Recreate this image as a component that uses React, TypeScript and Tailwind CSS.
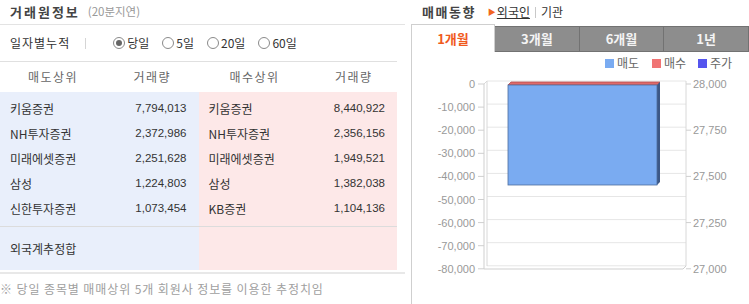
import React from 'react';

const kr = "font-['Noto_Sans_CJK_KR','Noto_Sans',sans-serif]";
const num = "font-['Liberation_Sans',Arial,sans-serif]";

const sells = [
  ['키움증권', '7,794,013'],
  ['NH투자증권', '2,372,986'],
  ['미래에셋증권', '2,251,628'],
  ['삼성', '1,224,803'],
  ['신한투자증권', '1,073,454'],
];

const buys = [
  ['키움증권', '8,440,922'],
  ['NH투자증권', '2,356,156'],
  ['미래에셋증권', '1,949,521'],
  ['삼성', '1,382,038'],
  ['KB증권', '1,104,136'],
];

const periods = [
  { label: '당일', checked: true },
  { label: '5일' },
  { label: '20일' },
  { label: '60일' },
];

function Radio({ checked }: { checked?: boolean }) {
  return (
    <span className="w-[12px] h-[12px] rounded-full border border-[#8a8a8a] bg-white flex items-center justify-center mr-[2px]">
      {checked && <span className="w-[6px] h-[6px] rounded-full bg-[#666]" />}
    </span>
  );
}

function RankRows({ rows }: { rows: string[][] }) {
  return (
    <div className="pt-[4px] pb-[5px]">
      {rows.map(([name, vol]) => (
        <div key={name} className="h-[25px] flex items-center justify-between pl-[10px] pr-[12px]">
          <span className="text-[12px]">{name}</span>
          <span className={`${num} text-[11.5px] text-[#333]`}>{vol}</span>
        </div>
      ))}
    </div>
  );
}

function Chart() {
  const left = [0, -10000, -20000, -30000, -40000, -50000, -60000, -70000, -80000];
  const right = [28000, 27750, 27500, 27250, 27000];
  return (
    <svg width="337" height="252" className="block">
      {/* legend */}
      <rect x="193" y="7" width="9" height="9" fill="#7aabf1" />
      <text x="205" y="16" fontSize="12" fill="#666" fontFamily="Noto Sans CJK KR">매도</text>
      <rect x="240" y="7" width="9" height="9" fill="#f07474" />
      <text x="252" y="16" fontSize="12" fill="#666" fontFamily="Noto Sans CJK KR">매수</text>
      <rect x="286" y="7" width="9" height="9" fill="#5555ee" />
      <text x="298" y="16" fontSize="12" fill="#666" fontFamily="Noto Sans CJK KR">주가</text>

      {/* grid + walls */}
      {left.map((v, i) => (
        <line key={v} x1="75" x2="274" y1={29 + i * 23.1} y2={29 + i * 23.1} stroke="#e6e6e6" />
      ))}
      <line x1="75" x2="75" y1="29" y2="214" stroke="#d8d8d8" />
      <line x1="72" x2="72" y1="32" y2="217" stroke="#cfcfcf" />
      <line x1="72" x2="75" y1="32" y2="29" stroke="#d8d8d8" />
      <line x1="274" x2="274" y1="29" y2="214" stroke="#d8d8d8" />
      <line x1="72" x2="271" y1="217" y2="217" stroke="#cfcfcf" />
      <line x1="271" x2="274" y1="217" y2="214" stroke="#cfcfcf" />

      {left.map((v, i) => (
        <g key={v}>
          <line x1="66" x2="72" y1={32 + i * 23.1} y2={32 + i * 23.1} stroke="#cfcfcf" />
          <text x="63" y={36 + i * 23.1} fontSize="11" fill="#999" textAnchor="end" fontFamily="Liberation Sans">
            {v.toLocaleString('en-US')}
          </text>
        </g>
      ))}
      {right.map((v, i) => (
        <g key={v}>
          <line x1="274" x2="279" y1={32 + i * 46.2} y2={32 + i * 46.2} stroke="#cfcfcf" />
          <text x="281" y={36 + i * 46.2} fontSize="11" fill="#999" fontFamily="Liberation Sans">
            {v.toLocaleString('en-US')}
          </text>
        </g>
      ))}

      {/* bar */}
      <polygon points="96,33 99,30 248,30 245,33" fill="#df6a6a" stroke="#b54c4c" strokeWidth="0.8" />
      <polygon points="245,33 248,30 248,130 245,133" fill="#3d5886" />
      <rect x="96" y="33" width="149" height="100" fill="#7aabf1" stroke="#4e6e9e" strokeWidth="0.8" />
    </svg>
  );
}

export default function App() {
  return (
    <div className={`${kr} flex w-[749px] h-[304px] overflow-hidden bg-white text-[#333]`}>
      {/* left: 거래원정보 */}
      <div className="w-[405px] shrink-0">
        <div className="h-[25px] flex items-center pl-[10px] border-b border-[#e3e3e3]">
          <span className="text-[13px] font-bold tracking-[2px] text-[#444]">거래원정보</span>
          <span className="ml-[8px] text-[11.5px] text-[#999]">(20분지연)</span>
        </div>
        <div className="h-[36px] flex items-center pl-[10px] text-[12px]">
          <span className="tracking-[1px]">일자별누적</span>
          <span className="ml-[15px] w-px h-[11px] bg-[#d5d5d5]" />
          <div className="ml-[27px] flex items-center gap-[13px]">
            {periods.map((p) => (
              <label key={p.label} className="flex items-center">
                <Radio checked={p.checked} />
                <span>{p.label}</span>
              </label>
            ))}
          </div>
        </div>

        <div className="w-[397px] border-t border-[#e0e0e0]">
          <div className="grid grid-cols-2 h-[30px] text-[12px] text-[#666] tracking-[1.5px]">
            <div className="flex items-center">
              <span className="w-[106px] text-center">매도상위</span>
              <span className="flex-1 text-center">거래량</span>
            </div>
            <div className="flex items-center">
              <span className="w-[112px] text-center">매수상위</span>
              <span className="flex-1 text-center">거래량</span>
            </div>
          </div>
          <div className="grid grid-cols-2">
            <div className="bg-[#e9effb]">
              <RankRows rows={sells} />
            </div>
            <div className="bg-[#fde8e8]">
              <RankRows rows={buys} />
            </div>
          </div>
          <div className="h-px bg-[#dcdcdc]" />
          <div className="grid grid-cols-2 h-[43px]">
            <div className="bg-[#e9effb] flex items-center pl-[10px] text-[12px]">외국계추정합</div>
            <div className="bg-[#fde8e8]" />
          </div>
        </div>
        <div className="mt-[2px] border-t-2 border-[#e8e8e8] h-[31px] flex items-center text-[12px] tracking-[0.9px] text-[#a0a0a0]">
          ※ 당일 종목별 매매상위 5개 회원사 정보를 이용한 추정치임
        </div>
      </div>

      {/* right: 매매동향 */}
      <div className="ml-[6px] w-[338px] shrink-0">
        <div className="h-[24px] flex items-center pl-[11px] text-[12px]">
          <span className="text-[13px] font-bold tracking-[1.5px] text-[#444]">매매동향</span>
          <span className="ml-[12px] text-[8px] text-[#f26522]">▶</span>
          <span className="ml-[1px] underline">외국인</span>
          <span className="mx-[5px] w-px h-[11px] bg-[#c8c8c8]" />
          <span>기관</span>
        </div>
        <div className="flex items-end h-[28px]">
          <div className="w-[84px] h-[28px] border border-b-0 border-[#cfcfcf] bg-white flex items-center justify-center text-[13px] font-bold text-[#f05a1e]">
            1개월
          </div>
          {['3개월', '6개월', '1년'].map((t) => (
            <div
              key={t}
              className="flex-1 h-[26px] bg-[#8d8d8d] border border-l-0 border-[#727272] flex items-center justify-center text-[13px] font-bold text-[#f4f4f4]"
            >
              {t}
            </div>
          ))}
        </div>
        <div className="h-[252px] border-l border-[#cfcfcf]">
          <Chart />
        </div>
      </div>
    </div>
  );
}
